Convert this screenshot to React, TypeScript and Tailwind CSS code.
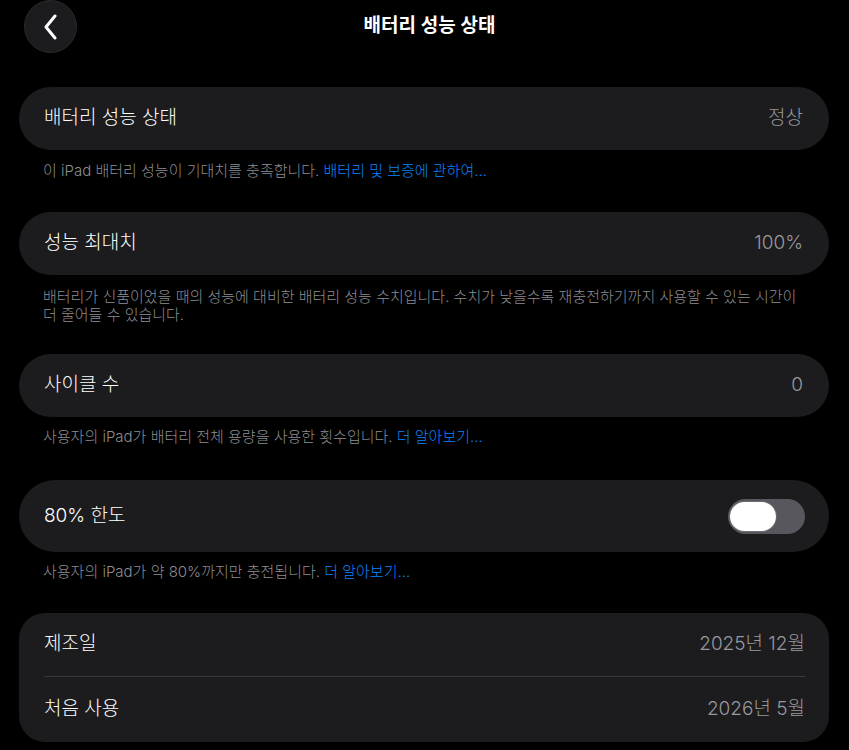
import React from 'react';

const font = { fontFamily: 'Inter, "Noto Sans CJK KR", sans-serif' };

const Row = ({ label, value }: { label: string; value?: string }) => (
    <div className="flex h-[63px] items-center justify-between rounded-full bg-[#1c1c1e] pl-[25px] pr-[26px]">
        <span className="text-[19px] font-light text-white">{label}</span>
        {value && <span className="text-[19px] font-light text-[#98989f]">{value}</span>}
    </div>
);

const Note = ({ children, className = '' }: { children: React.ReactNode; className?: string }) => (
    <p className={`px-[24px] text-[15px] font-light leading-[18px] text-[#8d8d93] ${className}`}>{children}</p>
);

const Link = ({ children }: { children: React.ReactNode }) => <span className="text-[#0a84ff]">{children}</span>;

export default function App() {
    return (
        <div className="min-h-[750px] w-[849px] overflow-hidden bg-black" style={font}>
            {/* header */}
            <div className="relative flex h-[52px] items-center justify-center">
                <button className="absolute left-[24px] top-0 flex h-[53px] w-[53px] items-center justify-center rounded-full border border-[#2a2a2c] bg-[#1c1c1e]">
                    <svg width="16" height="26" viewBox="0 0 16 26" fill="none">
                        <path d="M12 2 L3 13 L12 24" stroke="white" strokeWidth="3" strokeLinecap="round" strokeLinejoin="round" />
                    </svg>
                </button>
                <h1 className="pl-[10px] text-[19px] font-semibold text-white">배터리 성능 상태</h1>
            </div>

            <div className="mx-[19px] mt-[35px] w-[810px]">
                <Row label="배터리 성능 상태" value="정상" />
                <Note className="mb-[32px] pt-[12px]">
                    이 iPad 배터리 성능이 기대치를 충족합니다. <Link>배터리 및 보증에 관하여...</Link>
                </Note>

                <Row label="성능 최대치" value="100%" />
                <Note className="mb-[30px] pt-[13px]">
                    배터리가 신품이었을 때의 성능에 대비한 배터리 성능 수치입니다. 수치가 낮을수록 재충전하기까지 사용할 수 있는 시간이 더 줄어들 수 있습니다.
                </Note>

                <Row label="사이클 수" value="0" />
                <Note className="mb-[34px] pt-[11px]">
                    사용자의 iPad가 배터리 전체 용량을 사용한 횟수입니다. <Link>더 알아보기...</Link>
                </Note>

                <div className="flex h-[72px] items-center justify-between rounded-full bg-[#1c1c1e] pl-[25px] pr-[24px]">
                    <span className="text-[19px] font-light text-white">80% 한도</span>
                    <div className="flex h-[35px] w-[77px] items-center rounded-full bg-[#58575d] pl-[2px]">
                        <div className="h-[29px] w-[46px] rounded-full bg-white shadow-[0_0_0_1px_rgba(120,120,128,0.6)]" />
                    </div>
                </div>
                <Note className="mb-[32px] pt-[11px]">
                    사용자의 iPad가 약 80%까지만 충전됩니다. <Link>더 알아보기...</Link>
                </Note>

                <div className="rounded-[26px] bg-[#1c1c1e] pl-[25px] pr-[24px]">
                    <div className="flex h-[64px] items-center justify-between border-b border-[#38383a]">
                        <span className="text-[19px] font-light text-white">제조일</span>
                        <span className="text-[19px] font-light text-[#98989f]">2025년 12월</span>
                    </div>
                    <div className="flex h-[65px] items-center justify-between">
                        <span className="text-[19px] font-light text-white">처음 사용</span>
                        <span className="text-[19px] font-light text-[#98989f]">2026년 5월</span>
                    </div>
                </div>
            </div>
        </div>
    );
}
